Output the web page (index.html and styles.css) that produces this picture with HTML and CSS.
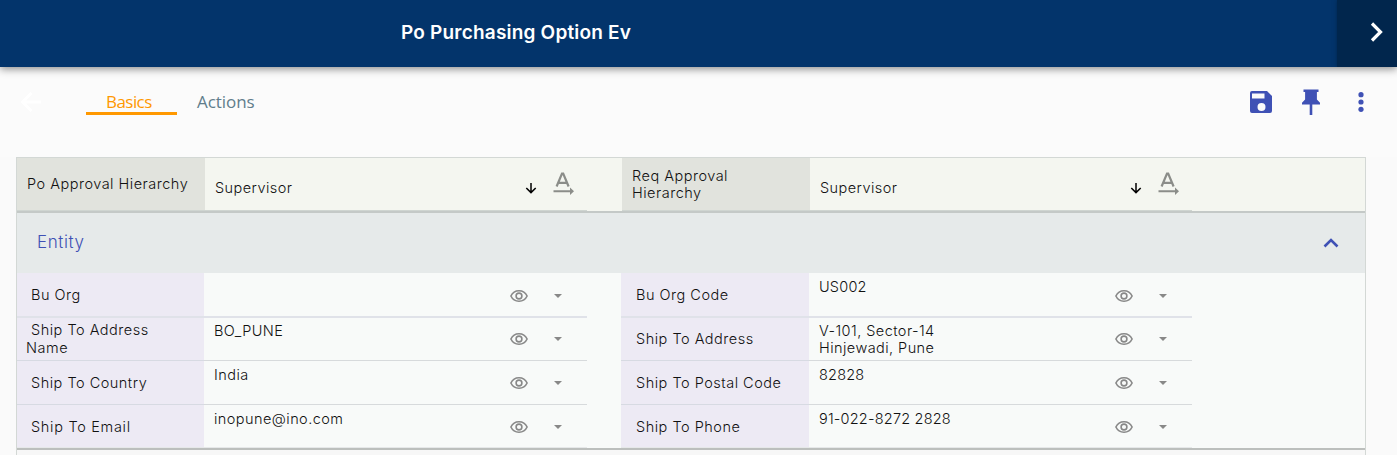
FILE: index.html
```
<!DOCTYPE html>
<html lang="en">
<head>
<meta charset="utf-8">
<title>Po Purchasing Option Ev</title>
<link rel="stylesheet" href="styles.css">
</head>
<body>
<svg width="0" height="0" class="defs">
  <symbol id="eye" viewBox="0 0 18 12"><path d="M.9 6C2.400 2.800 5.300.8 9 .8s6.600 2 8.100 5.200C15.600 9.200 12.700 11.200 9 11.200S2.400 9.200.9 6z"/><circle cx="9" cy="6" r="2.900"/></symbol>
  <symbol id="caret" viewBox="0 0 8 4"><path d="M0 0h8L4 4z"/></symbol>
  <symbol id="down" viewBox="0 0 12 12"><path d="M6 1v9.500M1.300 6 6 10.600 10.700 6"/></symbol>
  <symbol id="format" viewBox="0 0 22 24"><path d="M3.600 14.500 9 1.500h1.200l5.400 13M5.600 10.800h8" fill="none" stroke="#8b8d89" stroke-width="2.200"/><path d="M.5 18.200H17v-2.700l4 3.700-4 3.700v-2.700H.5z" fill="#8b8d89"/></symbol>
</svg>
<header class="topbar">
  <h1 class="title">Po Purchasing Option Ev</h1>
  <button class="next" aria-label="Next"><svg width="14" height="20" viewBox="0 0 14 20"><path d="M2 1.500 10.500 10 2 18.500"/></svg></button>
</header>
<nav class="toolbar">
  <svg class="back" width="22" height="20" viewBox="0 0 22 20"><path d="M21 10H3M11.500 1 2.500 10l9 9"/></svg>
  <div class="tabs"><a class="tab active">Basics</a><a class="tab">Actions</a></div>
  <div class="tools">
    <svg width="24" height="24" viewBox="0 0 24 24"><path fill-rule="evenodd" d="M3 1h15l5 5v15a2 2 0 0 1-2 2H3a2 2 0 0 1-2-2V3a2 2 0 0 1 2-2zm0 2.500v5h12.500v-5zM12.500 13a4 4 0 1 0 0 8 4 4 0 0 0 0-8z"/></svg>
    <svg width="20" height="26" viewBox="0 0 20 26"><path d="M2.500.5h15V3h-1.600v7.500l3.100 3.200v1.800h-7.700V26H8.700V15.500H1v-1.800l3.100-3.200V3H2.500z"/></svg>
    <svg width="6" height="20" viewBox="0 0 6 20"><circle cx="3" cy="2.700" r="2.600"/><circle cx="3" cy="10" r="2.600"/><circle cx="3" cy="17.300" r="2.600"/></svg>
  </div>
</nav>
<main class="panel">
  <section class="summary">
    <div class="label">Po Approval Hierarchy</div>
    <div class="value"><span class="text">Supervisor</span><svg class="down"><use href="#down"/></svg><svg class="format"><use href="#format"/></svg></div>
    <div class="label second">Req Approval<br>Hierarchy</div>
    <div class="value"><span class="text">Supervisor</span><svg class="down"><use href="#down"/></svg><svg class="format"><use href="#format"/></svg></div>
  </section>
  <div class="group"><span>Entity</span><svg width="16" height="10" viewBox="0 0 16 10"><path d="M1.500 8.500 8 2l6.500 6.500"/></svg></div>
  <section class="fields">
    <div class="label first thick">Bu Org</div>
    <div class="value thick"><span class="text"></span><svg class="eye"><use href="#eye"/></svg><svg class="caret"><use href="#caret"/></svg></div>
    <div class="label second thick">Bu Org Code</div>
    <div class="value thick"><span class="text num">US002</span><svg class="eye"><use href="#eye"/></svg><svg class="caret"><use href="#caret"/></svg></div>
    <div class="label first wrap">Ship To Address<br>Name</div>
    <div class="value raised"><span class="text">BO_PUNE</span><svg class="eye"><use href="#eye"/></svg><svg class="caret"><use href="#caret"/></svg></div>
    <div class="label second middle">Ship To Address</div>
    <div class="value raised"><span class="text">V-101, Sector-14<br>Hinjewadi, Pune</span><svg class="eye"><use href="#eye"/></svg><svg class="caret"><use href="#caret"/></svg></div>
    <div class="label first">Ship To Country</div>
    <div class="value"><span class="text">India</span><svg class="eye"><use href="#eye"/></svg><svg class="caret"><use href="#caret"/></svg></div>
    <div class="label second">Ship To Postal Code</div>
    <div class="value"><span class="text num">82828</span><svg class="eye"><use href="#eye"/></svg><svg class="caret"><use href="#caret"/></svg></div>
    <div class="label first last email">Ship To Email</div>
    <div class="value last"><span class="text">inopune@ino.com</span><svg class="eye"><use href="#eye"/></svg><svg class="caret"><use href="#caret"/></svg></div>
    <div class="label second last">Ship To Phone</div>
    <div class="value last"><span class="text num">91-022-8272 2828</span><svg class="eye"><use href="#eye"/></svg><svg class="caret"><use href="#caret"/></svg></div>
  </section>
</main>
</body>
</html>
```

FILE: styles.css
```
* { box-sizing: border-box; }
body { margin: 0; height: 455px; overflow: hidden; background: #fafafa; color: #111; font: 300 14.5px/17px Inter, sans-serif; letter-spacing: .5px; }
svg { display: block; flex: none; }
.defs { position: absolute; }
.topbar { display: flex; justify-content: space-between; height: 67px; background: #03346b; box-shadow: 0 2px 8px rgba(0,0,0,.45); position: relative; }
.title { margin: 20px 0 0 401px; color: #fff; font: 600 19px/26px Inter, sans-serif; letter-spacing: .2px; white-space: nowrap; }
.next { display: flex; align-items: flex-start; width: 60px; border: 0; padding: 22px 0 0 33px; background: #01264d; box-shadow: 0 0 4px #01264d; clip-path: inset(0 0 0 -6px); }
.next svg { fill: none; stroke: #fff; stroke-width: 3.200; }
.toolbar { height: 90px; display: flex; align-items: flex-start; background: #fbfbfb; }
.back { margin: 25px 0 0 20px; fill: none; stroke: #fff; stroke-width: 3; }
.tabs { display: flex; margin: 22px 0 0 44px; }
.tab { height: 26px; padding: 0 20px; font: 400 17px/25px "Open Sans", sans-serif; letter-spacing: -.55px; color: #607d8b; }
.tab.active { width: 91px; color: #ff9800; border-bottom: 3px solid #ff9800; }
.tab:last-child { letter-spacing: -.05px; }
.tools { display: flex; align-items: center; margin: 22px 33px 0 auto; gap: 28px; fill: #3f51b5; }
.tools svg:last-child { margin-left: 9px; }
.panel { width: 1350px; height: 298px; margin-left: 16px; border: solid #d3d8d5; border-width: 1px 1px 0; background: #f7f7f7; }
.summary { display: grid; grid-template-columns: 188px 382px 35px 188px 382px 173px; height: 55px; background: #f4f6f0; border-bottom: 2px solid #c4c9c7; }
.second { grid-column-start: 4; }
.first { grid-column-start: 1; }
.summary .label { display: flex; align-items: center; padding: 0 10px 1px; background: #e1e3dd; border-bottom: 1px solid #cfd5d1; white-space: nowrap; }
.value { display: flex; }
.text { flex: 1; white-space: nowrap; letter-spacing: .44px; }
.num { letter-spacing: .2px; }
.summary .value { padding: 21px 12px 0 10px; border-bottom: 1px solid #cfd5d1; }
.down { width: 12px; height: 12px; margin: 3px 16px 0 0; fill: none; stroke: #000; stroke-width: 1.500; }
.format { width: 22px; height: 24px; margin-top: -7px; }
.group { display: flex; justify-content: space-between; align-items: center; height: 60px; padding: 0 26px 2px 20px; background: #e6eaea; color: #3f51b5; font-size: 17px; line-height: 22px; letter-spacing: .6px; }
.group svg { fill: none; stroke: #3f51b5; stroke-width: 2.600; margin-top: 2px; }
.fields { display: grid; grid-template-columns: 187px 383px 34px 188px 383px 173px; grid-template-rows: 45px 43px 44px 43px; height: 177px; background: #f8faf9; border-bottom: 2px solid #bcbfbd; }
.fields .label { display: flex; align-items: center; padding: 0 0 0 14px; background: #edeaf4; border-bottom: 1px solid #d7dae2; white-space: nowrap; }
.fields .second { padding-left: 15px; }
.fields .middle { padding-bottom: 1px; }
.fields .value { padding: 5px 25px 0 10px; border-bottom: 1px solid #d7dadc; }
.fields .raised { padding-top: 4px; }
.fields .thick { border-bottom: 2px solid #e0e2e9; }
.fields .wrap { display: block; padding: 3px 0 0 9px; line-height: 18px; text-indent: 5px; }
.fields .last { border-bottom-color: #e6e8e9; }
.fields .email { letter-spacing: .7px; }
.eye { width: 18px; height: 12px; margin: 11px 26px 0 0; fill: none; stroke: #888; stroke-width: 1.600; }
.caret { width: 8px; height: 4px; margin-top: 15px; fill: #888; }
.thick .eye { margin-top: 12px; }
.thick .caret { margin-top: 16px; }
```
